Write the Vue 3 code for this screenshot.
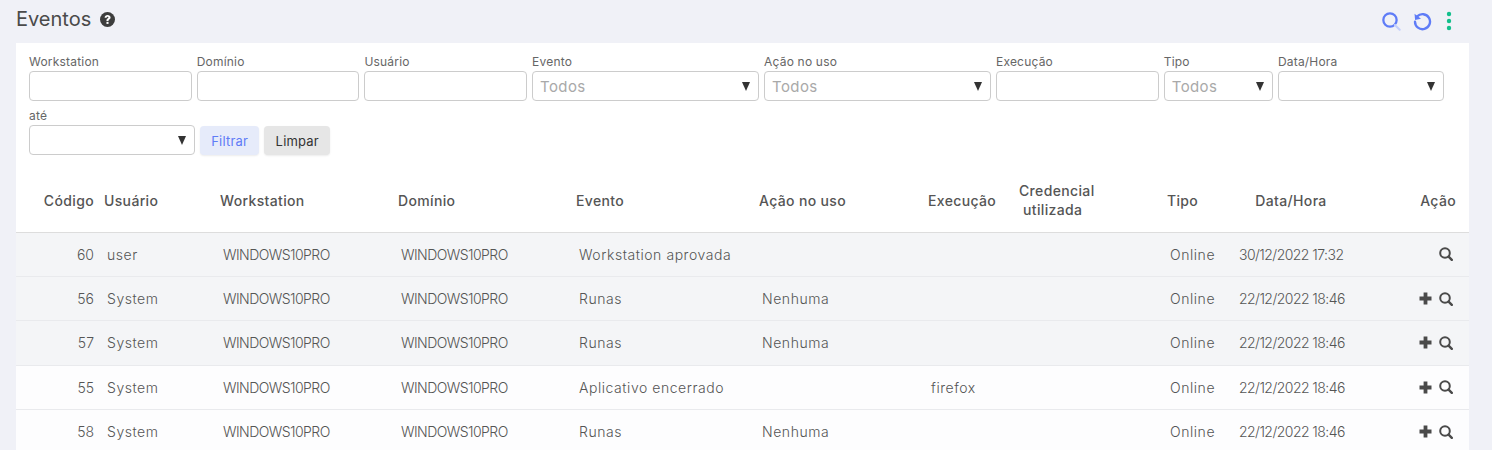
<template>
  <main class="page">
    <header class="top-bar">
      <div class="title-wrap">
        <h1 class="title">Eventos</h1>
        <svg class="help-icon" viewBox="0 0 16 16" aria-hidden="true">
          <circle cx="8" cy="8" r="8" fill="#3d3d3d" />
          <path d="M4.9 6c.1-1.9 1.4-2.9 3.2-2.9S11.3 4.1 11.3 5.8c0 1.2-.7 1.8-1.5 2.3-.5.3-.7.6-.7 1.1v.4H6.9v-.6c0-1 .5-1.6 1.1-2 .6-.4 1-.7 1-1.2 0-.5-.4-.8-.9-.8s-1 .4-1 1z" fill="#fff" />
          <rect x="6.9" y="10.5" width="2.2" height="2.2" fill="#fff" />
        </svg>
      </div>
      <div class="top-actions">
        <svg class="tool-icon" viewBox="0 0 20 20" aria-hidden="true">
          <circle cx="8.4" cy="8.4" r="7" fill="none" stroke="#5f7cf7" stroke-width="2.4" />
          <path d="M13.6 13.6l5 5" stroke="#c5d0fb" stroke-width="2.2" stroke-linecap="round" />
        </svg>
        <svg class="tool-icon" viewBox="0 0 20 20" aria-hidden="true">
          <path d="M4.4 4.6a7.9 7.9 0 1 1-2.3 5.6" fill="none" stroke="#5f7cf7" stroke-width="2.5" stroke-linecap="round" />
          <path d="M1.6 1.8l.6 6.6 6.2-1.2z" fill="#5f7cf7" />
        </svg>
        <svg class="dots-icon" viewBox="0 0 6 20" aria-hidden="true">
          <circle cx="3" cy="3" r="2.2" fill="#12bf8c" />
          <circle cx="3" cy="10" r="2.2" fill="#12bf8c" />
          <circle cx="3" cy="17" r="2.2" fill="#12bf8c" />
        </svg>
      </div>
    </header>

    <section class="card">
      <form class="filters" @submit.prevent>
        <div v-for="f in filters" :key="f.label" class="field" :class="f.cls">
          <label class="field-label">{{ f.label }}</label>
          <div v-if="f.select" class="select-box">
            <span class="select-value">{{ f.value }}</span>
            <span class="caret"></span>
          </div>
          <input v-else class="text-input" type="text" />
        </div>
        <div class="button-row">
          <button class="btn btn-filter" type="button">Filtrar</button>
          <button class="btn btn-clear" type="button">Limpar</button>
        </div>
      </form>

      <table class="grid">
        <colgroup>
          <col v-for="w in colWidths" :key="w.id" :style="{ width: w.px + 'px' }" />
        </colgroup>
        <thead>
          <tr>
            <th class="num">Código</th>
            <th>Usuário</th>
            <th>Workstation</th>
            <th>Domínio</th>
            <th>Evento</th>
            <th>Ação no uso</th>
            <th>Execução</th>
            <th>Credencial<br />&nbsp;utilizada</th>
            <th>Tipo</th>
            <th class="center">Data/Hora</th>
            <th class="act">Ação</th>
          </tr>
        </thead>
        <tbody>
          <tr v-for="r in rows" :key="r.id" :class="{ light: r.light }">
            <td class="num">{{ r.id }}</td>
            <td>{{ r.user }}</td>
            <td class="tight">WINDOWS10PRO</td>
            <td class="tight">WINDOWS10PRO</td>
            <td>{{ r.event }}</td>
            <td>{{ r.action }}</td>
            <td>{{ r.exec }}</td>
            <td></td>
            <td>Online</td>
            <td class="center tight">{{ r.date }}</td>
            <td class="act">
              <div class="row-icons">
                <svg v-if="r.plus" class="plus-icon" viewBox="0 0 13 13" aria-hidden="true">
                  <path d="M4.6 0.5h3.8v4.1h4.1v3.8H8.4v4.1H4.6V8.4H.5V4.6h4.1z" fill="#4a4a4a" />
                </svg>
                <svg class="search-icon" viewBox="0 0 14 14" aria-hidden="true">
                  <circle cx="6" cy="6" r="4.8" fill="none" stroke="#4a4a4a" stroke-width="2" />
                  <path d="M9.6 9.6l3.2 3.2" stroke="#4a4a4a" stroke-width="2.4" stroke-linecap="round" />
                </svg>
              </div>
            </td>
          </tr>
        </tbody>
      </table>
    </section>
  </main>
</template>

<script setup>
const filters = [
  { label: 'Workstation', cls: 'w-text' },
  { label: 'Domínio', cls: 'w-text' },
  { label: 'Usuário', cls: 'w-text' },
  { label: 'Evento', cls: 'w-wide', select: true, value: 'Todos' },
  { label: 'Ação no uso', cls: 'w-wide', select: true, value: 'Todos' },
  { label: 'Execução', cls: 'w-text' },
  { label: 'Tipo', cls: 'w-type', select: true, value: 'Todos' },
  { label: 'Data/Hora', cls: 'w-date', select: true, value: '' },
  { label: 'até', cls: 'w-date', select: true, value: '' }
]

const colWidths = [88, 116, 178, 178, 183, 169, 91, 148, 72, 104, 126].map((px, id) => ({ id, px }))

const rows = [
  { id: 60, user: 'user', event: 'Workstation aprovada', action: '', exec: '', date: '30/12/2022 17:32', plus: false },
  { id: 56, user: 'System', event: 'Runas', action: 'Nenhuma', exec: '', date: '22/12/2022 18:46', plus: true },
  { id: 57, user: 'System', event: 'Runas', action: 'Nenhuma', exec: '', date: '22/12/2022 18:46', plus: true },
  { id: 55, user: 'System', event: 'Aplicativo encerrado', action: '', exec: 'firefox', date: '22/12/2022 18:46', plus: true, light: true },
  { id: 58, user: 'System', event: 'Runas', action: 'Nenhuma', exec: '', date: '22/12/2022 18:46', plus: true, light: true }
]
</script>

<style>
html,
body {
  height: 450px;
  overflow: hidden;
  background: #f0f1f7;
}
</style>

<style scoped>
.page {
  height: 450px;
  overflow: hidden;
  box-sizing: border-box;
  padding: 0 23px 0 16px;
  font-family: 'Inter', 'Open Sans', sans-serif;
  color: #444;
}

.top-bar {
  height: 43px;
  display: flex;
  justify-content: space-between;
  align-items: flex-start;
}

.title-wrap {
  display: flex;
  align-items: center;
  gap: 9px;
  height: 39px;
}

.title {
  margin: 0;
  font-size: 20px;
  font-weight: 400;
  line-height: 39px;
  color: #4a4a4a;
}

.help-icon {
  width: 15px;
  height: 15px;
}

.top-actions {
  display: flex;
  align-items: center;
  gap: 11.5px;
  padding: 11px 17px 0 0;
}

.tool-icon {
  width: 19px;
  height: 19px;
}

.dots-icon {
  width: 6px;
  height: 20px;
  margin-left: 3px;
}

.card {
  background: #fff;
  height: 407px;
}

.filters {
  display: flex;
  flex-wrap: wrap;
  column-gap: 5.2px;
  row-gap: 6px;
  padding: 10px 13px 0;
  width: 1453px;
  box-sizing: border-box;
}

.field {
  display: flex;
  flex-direction: column;
}

.w-text { width: 162.5px; }
.w-wide { width: 226.8px; }
.w-type { width: 109px; }
.w-date { width: 166px; }

.field-label {
  font-size: 12px;
  line-height: 18px;
  letter-spacing: 0.2px;
  color: #666;
}

.text-input,
.select-box {
  height: 30px;
  box-sizing: border-box;
  border: 1.5px solid #ccc;
  border-radius: 4px;
  background: #fff;
  width: 100%;
}

.select-box {
  display: flex;
  align-items: center;
  justify-content: space-between;
  padding: 0 8px 0 7px;
}

.select-value {
  font-size: 15px;
  letter-spacing: 0.4px;
  color: #a9a9a9;
}

.caret {
  width: 0;
  height: 0;
  border-left: 4.5px solid transparent;
  border-right: 4.5px solid transparent;
  border-top: 9px solid #333;
}

.button-row {
  display: flex;
  gap: 5px;
  align-items: flex-end;
}

.btn {
  height: 29px;
  border: none;
  border-radius: 4px;
  padding: 0 11.5px;
  font-family: inherit;
  font-size: 13px;
  letter-spacing: 0.2px;
  box-shadow: 0 1px 2px rgba(0, 0, 0, 0.08);
}

.btn-filter {
  padding: 0 11px;
  background: #e6ebfa;
  color: #5f7cf7;
}

.btn-clear {
  background: #e6e6e6;
  color: #333;
}

.grid {
  width: 1453px;
  table-layout: fixed;
  border-collapse: collapse;
  margin-top: 14px;
}

th {
  height: 63px;
  padding: 0;
  box-sizing: border-box;
  text-align: left;
  font-size: 14px;
  font-weight: 500;
  line-height: 19px;
  letter-spacing: 0.35px;
  color: #555;
  border-bottom: 1.5px solid #ddd;
}

td {
  height: 43.4px;
  padding: 0 0 0 3px;
  font-size: 14px;
  font-weight: 300;
  letter-spacing: 0.55px;
  color: #555;
  background: #f4f5f7;
  border-bottom: 1px solid #e9eaed;
  white-space: nowrap;
}

td.tight {
  letter-spacing: -0.55px;
}

.light td {
  background: #fdfdfe;
}

.num {
  text-align: right;
  padding-right: 10px;
}

td.num {
  padding-left: 0;
  letter-spacing: 0;
}

th.center,
td.center {
  text-align: center;
}

td.center {
  padding-left: 0;
}

th.act {
  text-align: right;
  padding-right: 13px;
}

td.act {
  padding: 0 16px 0 0;
}

.row-icons {
  display: flex;
  justify-content: flex-end;
  gap: 7px;
  align-items: center;
}

.plus-icon {
  width: 13px;
  height: 13px;
}

.search-icon {
  width: 14px;
  height: 14px;
}
</style>
